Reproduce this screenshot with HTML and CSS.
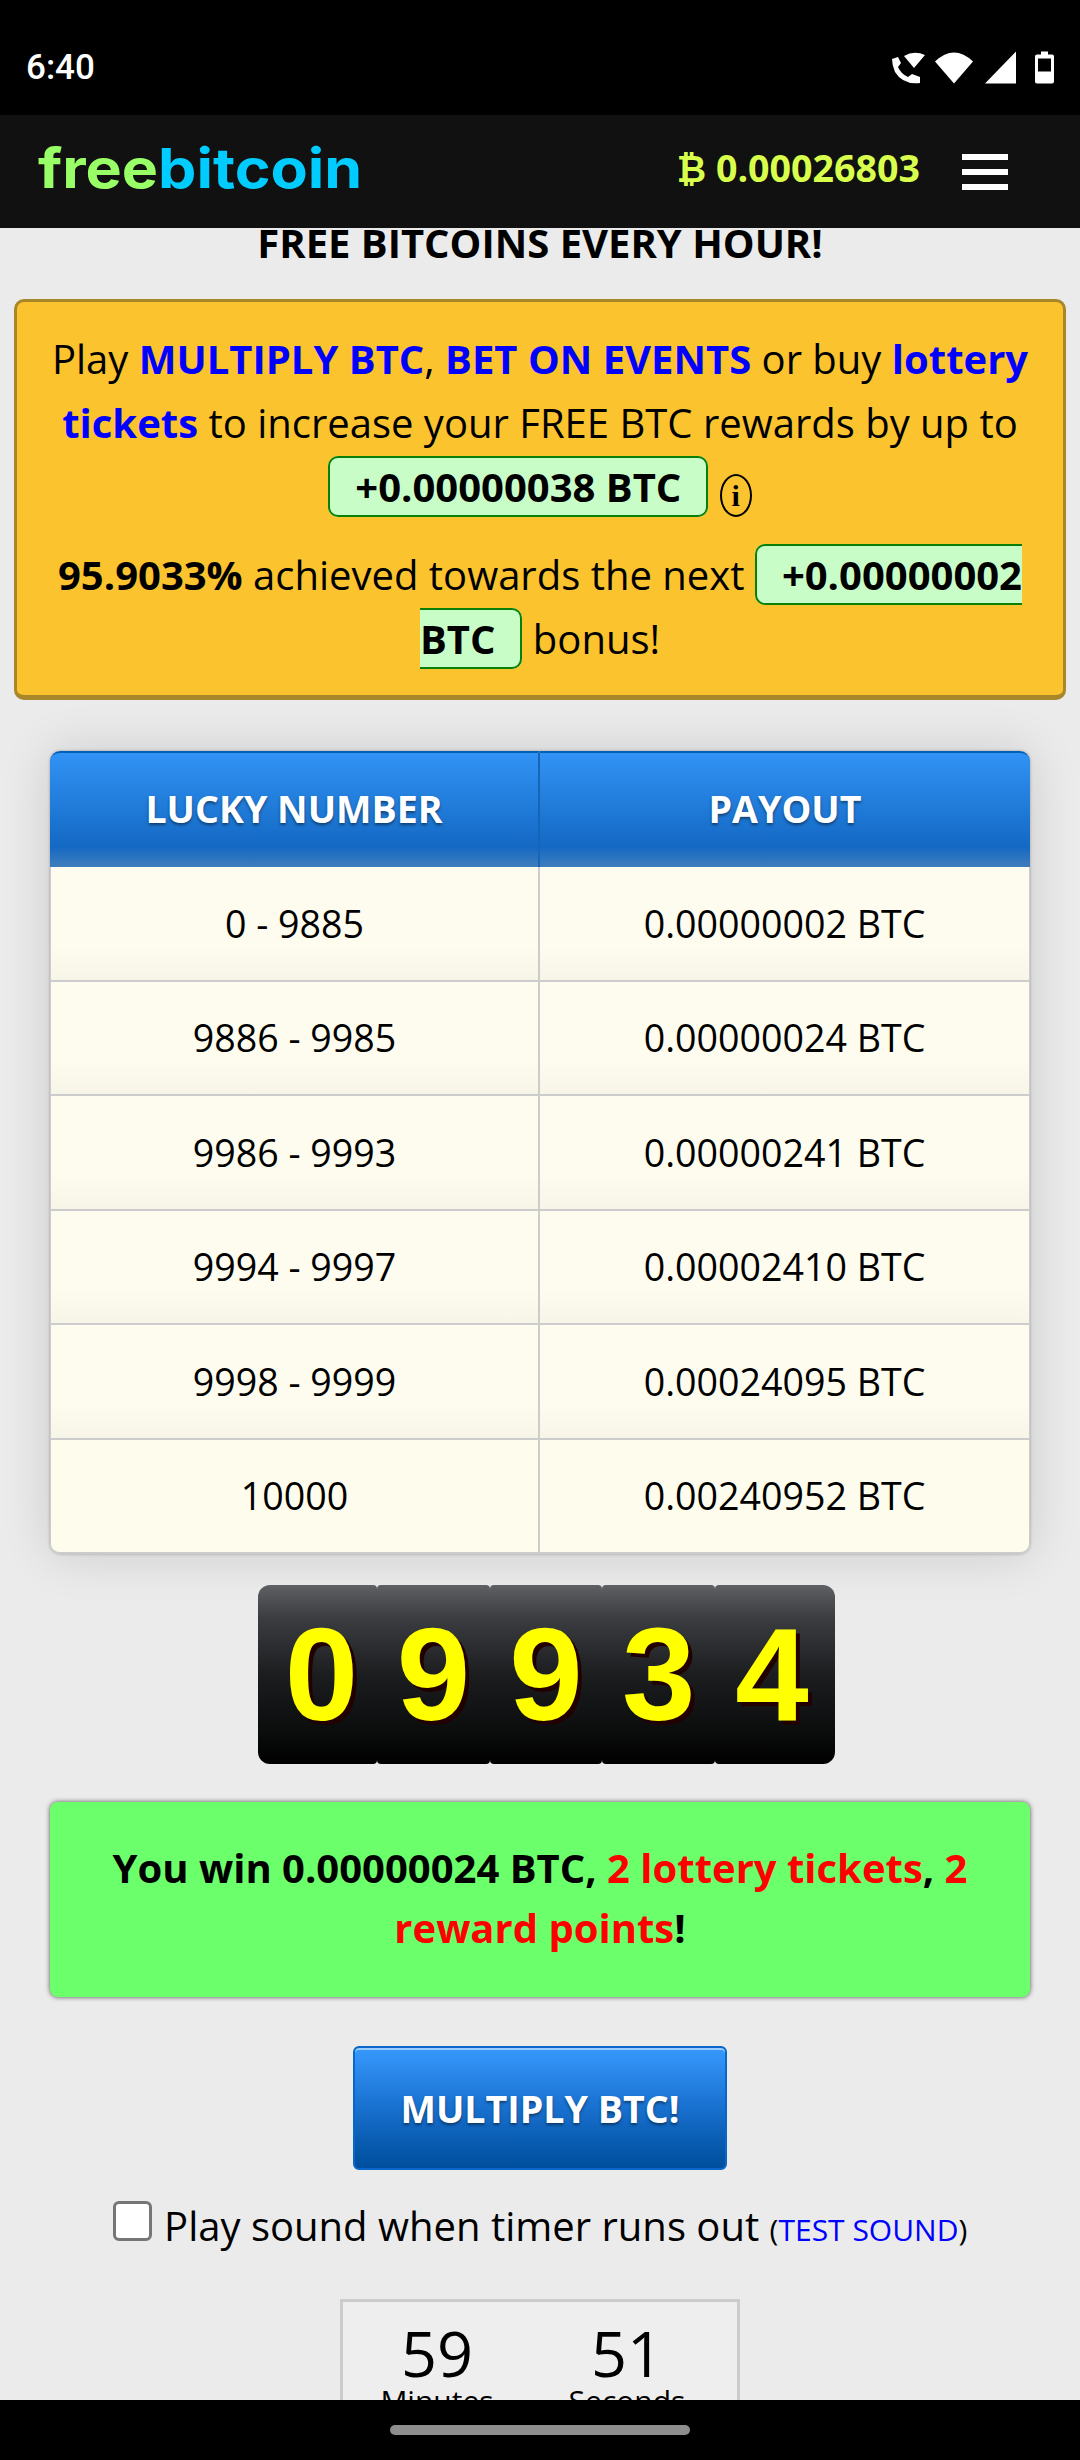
FILE: index.html
```html
<!DOCTYPE html>
<html lang="en">
<head>
<meta charset="utf-8">
<title>freebitcoin</title>
<link rel="stylesheet" href="styles.css">
</head>
<body>
<div class="screen">
  <div class="status">
    <span class="time">6:40</span>
    <div class="status-icons">
      <svg class="ic-call" viewBox="0 0 35 33"><path d="M13 5Q23-1 34 4L23 17Z"/><path d="M1 8L7 6L10 12L7 16Q10 23 17 26L21 23L29 26L29 32Q12 34 4 21Q1 14 1 8Z"/></svg>
      <svg class="ic-wifi" viewBox="0 0 38 32"><path d="M0 10Q19-8 38 10L19 32Z"/></svg>
      <svg class="ic-signal" viewBox="0 0 31 32"><path d="M31 0V32H0Z"/></svg>
      <svg class="ic-batt" viewBox="0 0 19 32"><path fill-rule="evenodd" d="M6 0H13V3H17Q19 3 19 5V30Q19 32 17 32H2Q0 32 0 30V5Q0 3 2 3H6ZM3 7V20H16V7Z"/></svg>
    </div>
  </div>
  <header class="topbar">
    <div class="logo-slot"><div class="logo"><span class="logo-free">free</span><span class="logo-bit">bitcoin</span></div></div>
    <div class="balance"><span class="btc-sign">₿</span> 0.00026803</div>
    <div class="burger"><i></i><i></i><i></i></div>
  </header>
  <main class="content">
    <h1 class="title">FREE BITCOINS EVERY HOUR!</h1>
    <section class="promo">
      <p class="promo-p">Play <b class="lnk">MULTIPLY BTC</b>, <b class="lnk">BET ON EVENTS</b> or buy <b class="lnk">lottery tickets</b> to increase your FREE BTC rewards by up to <b class="pill">+0.00000038 BTC</b> <span class="info">i</span></p>
      <p class="promo-p promo-second"><b>95.9033%</b> achieved towards the next <b class="pill">+0.00000002 BTC</b> bonus!</p>
    </section>
    <table class="payout">
      <thead><tr><th>LUCKY NUMBER</th><th>PAYOUT</th></tr></thead>
      <tbody>
        <tr><td>0 - 9885</td><td>0.00000002 BTC</td></tr>
        <tr><td>9886 - 9985</td><td>0.00000024 BTC</td></tr>
        <tr><td>9986 - 9993</td><td>0.00000241 BTC</td></tr>
        <tr><td>9994 - 9997</td><td>0.00002410 BTC</td></tr>
        <tr><td>9998 - 9999</td><td>0.00024095 BTC</td></tr>
        <tr><td>10000</td><td>0.00240952 BTC</td></tr>
      </tbody>
    </table>
    <div class="roll">
      <span class="digit">0</span><span class="digit">9</span><span class="digit">9</span><span class="digit">3</span><span class="digit">4</span>
    </div>
    <div class="win"><b>You win 0.00000024 BTC, <span class="red">2 lottery tickets</span>, <span class="red">2 reward points</span>!</b></div>
    <button class="multiply" type="button">MULTIPLY BTC!</button>
    <label class="sound"><input class="check" type="checkbox"> Play sound when timer runs out <small class="test">(<span class="lnk-plain">TEST SOUND</span>)</small></label>
    <div class="timer">
      <div class="tcol"><span class="tnum">59</span><span class="tlab">Minutes</span></div>
      <div class="tcol"><span class="tnum">51</span><span class="tlab">Seconds</span></div>
    </div>
  </main>
  <div class="navbar"><span class="handle"></span></div>
</div>
</body>
</html>
```
FILE: styles.css
```css
* { box-sizing: border-box; }
html, body { margin: 0; padding: 0; background: #000; }
body { font-family: "Open Sans", "Liberation Sans", sans-serif; color: #000; }
.screen { width: 1080px; height: 2460px; display: flex; flex-direction: column; overflow: hidden; }

.status { height: 115px; flex: none; background: #000; display: flex; align-items: center; justify-content: space-between; padding: 20px 26px 0 26px; }
.time { font-family: Roboto, sans-serif; font-weight: 500; font-size: 35px; color: #fff; }
.status-icons { display: flex; align-items: center; gap: 9px; }
.status-icons svg { fill: #fff; display: block; height: 33px; }
.ic-call { width: 35px; }
.ic-wifi { width: 38px; }
.ic-signal { width: 31px; margin-left: 3px; }
.ic-batt { width: 19px; margin-left: 10px; }

.topbar { height: 113px; flex: none; background: #111; display: flex; align-items: center; padding: 0 72px 0 38px; }
.logo-slot { flex: 1; padding-bottom: 6px; }
.logo { font-family: Inter, sans-serif; font-weight: 700; font-size: 55px; line-height: 1; display: inline-block; transform: scaleX(1.107); transform-origin: left center; }
.logo-free { color: #99ff66; }
.logo-bit { color: #00ccff; }
.balance { font-weight: 700; font-size: 37.6px; color: #d9ff4d; margin-right: 42px; padding-bottom: 8px; }
.btc-sign { font-family: "DejaVu Sans", sans-serif; font-weight: 700; font-size: 36px; }
.burger { width: 46px; display: flex; flex-direction: column; gap: 9px; }
.burger i { display: block; height: 6px; background: #fff; }

.content { flex: 1; min-height: 0; overflow: hidden; background: #ebebeb; display: flex; flex-direction: column; align-items: center; }
.title { margin: 0; font-size: 40px; line-height: 30px; font-weight: 700; text-align: center; flex: none; }

.promo { width: 1052px; height: 401px; flex: none; margin-top: 41px; background: #fbc32e; border: 3px solid #a8862a; border-bottom-width: 5px; border-radius: 10px; padding: 25px 29px 0; text-align: center; font-size: 40px; line-height: 64px; }
.promo-p { margin: 0; }
.promo-second { margin-top: 24px; }
.lnk { color: #0000ff; }
.pill { background: #c8fdc8; border: 2px solid #088008; border-radius: 10px; padding: 1px 25px; }
.info { display: inline-block; width: 32px; height: 43px; border: 2px solid #000; border-radius: 50%; font-family: "Liberation Serif", serif; font-weight: 700; font-size: 30px; line-height: 39px; text-align: center; vertical-align: -4px; margin-left: 1px; }

.payout { width: 980px; margin-top: 51px; table-layout: fixed; border-collapse: separate; border-spacing: 0; border-radius: 10px; box-shadow: 0 0 50px rgba(0,0,0,.14), 0 0 3px rgba(0,0,0,.3); font-size: 37.6px; text-align: center; flex: none; }
.payout th { height: 116px; padding: 0 0 3px; font-weight: 700; color: #fff; text-shadow: 0 2px 3px rgba(0,0,0,.45); background: linear-gradient(#3193f5, #1469c4 82%, #3f7dbb); border-top: 2px solid #0060b8; }
.payout th:first-child { border-top-left-radius: 10px; border-right: 2px solid #1565b8; }
.payout th:last-child { border-top-right-radius: 10px; }
.payout td { height: 114.5px; padding: 0; background: linear-gradient(#fdfcee 70%, #f6f5e8); border-bottom: 2px solid #ccc; }
.payout td:first-child { border-right: 2px solid #ccc; border-left: 1px solid #ccc; }
.payout td:last-child { border-right: 1px solid #ccc; }
.payout tr:last-child td { background: #fefded; }
.payout tr:last-child td:first-child { border-bottom-left-radius: 10px; }
.payout tr:last-child td:last-child { border-bottom-right-radius: 10px; }

.roll { width: 577px; height: 179px; margin: 31px 0 0 13px; flex: none; display: flex; font-family: "Liberation Sans", sans-serif; }
.digit { flex: 1 1 113px; background: linear-gradient(#5f6064, #3b3d41 18%, #1c1d1f 50%, #0b0c0c 82%, #000); border-radius: 4px; display: flex; align-items: center; justify-content: center; font-size: 132px; font-weight: 700; color: #ff0; text-shadow: 4px 4px 0 #200; line-height: 1; }
.digit:first-child { flex: 0 0 119px; padding-left: 8px; border-radius: 12px 4px 4px 12px; }
.digit:last-child { flex: 0 0 120px; padding-right: 6px; border-radius: 4px 12px 12px 4px; }

.win { width: 980px; height: 195px; margin-top: 38px; flex: none; background: #6cff6c; border-radius: 8px; box-shadow: 0 0 5px rgba(0,0,0,.65); text-align: center; font-size: 40px; line-height: 60px; padding: 36px 40px 0; }
.red { color: #f00; }

.multiply { width: 374px; height: 124px; margin-top: 49px; flex: none; padding: 0; border: 2px solid #0a66c8; border-radius: 6px; background: linear-gradient(#3799fd, #1b74d4 45%, #0a5eb4 75%, #004f9e); box-shadow: inset 0 2px 0 rgba(255,255,255,.5); color: #fff; font-family: inherit; font-weight: 700; font-size: 37.6px; text-shadow: 0 2px 3px rgba(0,0,0,.45); }

.sound { margin-top: 24px; font-size: 40px; line-height: 64px; white-space: nowrap; display: block; flex: none; }
.check { appearance: none; -webkit-appearance: none; display: inline-block; width: 39px; height: 40px; margin: 0 2px 0 0; background: #fff; border: 3px solid #767676; border-radius: 6px; vertical-align: 0; }
.test { font-size: 30px; }
.lnk-plain { color: #0000ff; }

.timer { width: 400px; height: 140px; margin-top: 37px; flex: none; border: 3px solid #ccc; background: #eee; display: flex; justify-content: center; gap: 70px; padding: 23px 16px 0 0; text-align: center; }
.tcol { width: 120px; display: flex; flex-direction: column; }
.tnum { font-size: 63px; line-height: 56px; }
.tlab { font-size: 30px; line-height: 40px; }

.navbar { height: 60px; flex: none; background: #000; display: flex; align-items: center; justify-content: center; }
.handle { width: 300px; height: 10px; border-radius: 5px; background: #8e8e8e; }
```
